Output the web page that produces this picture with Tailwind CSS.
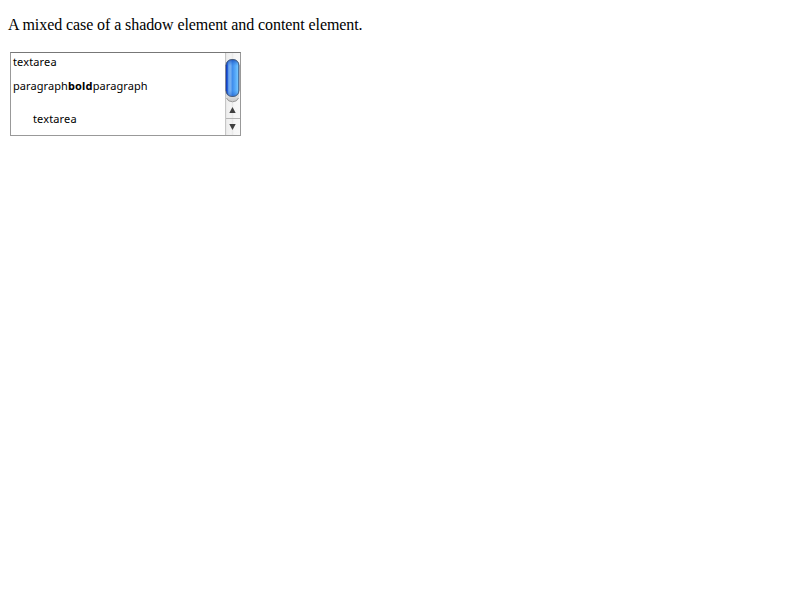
<!DOCTYPE html>
<html lang="en">
<head>
<meta charset="utf-8">
<title>Shadow and content elements</title>
<script src="https://cdn.jsdelivr.net/npm/@tailwindcss/browser@4"></script>
</head>
<body class="bg-white text-black">
<main class="px-2 pt-4">
  <p class="font-['Liberation_Serif',serif] text-[16px] leading-[18px] tracking-[-0.085px] whitespace-nowrap">A mixed case of a shadow element and content element.</p>
  <div class="ml-[2px] mt-[18px] flex h-[84px] w-[231px] border border-[#999] border-t-[#777] bg-white">
    <div class="grow pl-[2px] pt-[2px] font-['Noto_Sans',sans-serif] text-[11px] leading-[14px] whitespace-nowrap">
      <p class="tracking-[0.14px]">textarea</p>
      <p class="mt-[10px] tracking-[0.08px]">paragraph<b class="tracking-[0.15px]">bold</b>paragraph</p>
      <p class="mt-[19px] ml-5 tracking-[0.14px]">textarea</p>
    </div>
    <svg class="h-[82px] w-[15px] shrink-0" viewBox="0 0 15 82">
      <defs>
        <linearGradient id="track"><stop offset="0" stop-color="#d0d0d0"/><stop offset=".12" stop-color="#eeeeee"/><stop offset=".42" stop-color="#f4f4f4"/><stop offset=".47" stop-color="#e6e6e6"/><stop offset=".6" stop-color="#f6f6f6"/><stop offset="1" stop-color="#f8f8f8"/></linearGradient>
        <linearGradient id="thumb"><stop offset="0" stop-color="#1238b0"/><stop offset=".13" stop-color="#2460d8"/><stop offset=".22" stop-color="#70a8ee"/><stop offset=".38" stop-color="#76b0f2"/><stop offset=".48" stop-color="#3f8ceb"/><stop offset=".7" stop-color="#56a8f8"/><stop offset=".88" stop-color="#6fc2ff"/><stop offset="1" stop-color="#2b65b5"/></linearGradient>
        <linearGradient id="ends" x2="0" y2="1"><stop offset="0" stop-color="#1546b5" stop-opacity=".8"/><stop offset=".18" stop-color="#2878e0" stop-opacity="0"/><stop offset=".82" stop-color="#2878e0" stop-opacity="0"/><stop offset="1" stop-color="#1546b5" stop-opacity=".5"/></linearGradient>
        <linearGradient id="cap" x2="0" y2="1"><stop offset="0" stop-color="#c4c4c4"/><stop offset=".5" stop-color="#dedede"/><stop offset="1" stop-color="#c8c8c8"/></linearGradient>
      </defs>
      <rect width="15" height="82" fill="url(#track)"/>
      <path d="M.5 0V82" stroke="#c6c6c6"/>
      <path d="M1 38H14V43Q14 48.500 7.500 48.500Q1 48.500 1 43Z" fill="url(#cap)"/>
      <path d="M1.500 45Q3 48.800 7.500 48.800Q12 48.800 13.500 45" fill="none" stroke="#999"/>
      <rect x=".8" y="6.300" width="13.400" height="37.400" rx="6" fill="url(#thumb)"/>
      <rect x=".8" y="6.300" width="13.400" height="37.400" rx="6" fill="url(#ends)"/>
      <rect x="1" y="6.500" width="13" height="37" rx="6" fill="none" stroke="#505860" stroke-opacity=".8"/>
      <path d="M1.500 12V38" stroke="#163fb9"/>
      <path d="M1 65.500H15" stroke="#b5b5b5"/>
      <path d="M7.500 54L10.700 60H4.300ZM4.300 71H10.700L7.500 77Z" fill="#404040"/>
    </svg>
  </div>
</main>
</body>
</html>
